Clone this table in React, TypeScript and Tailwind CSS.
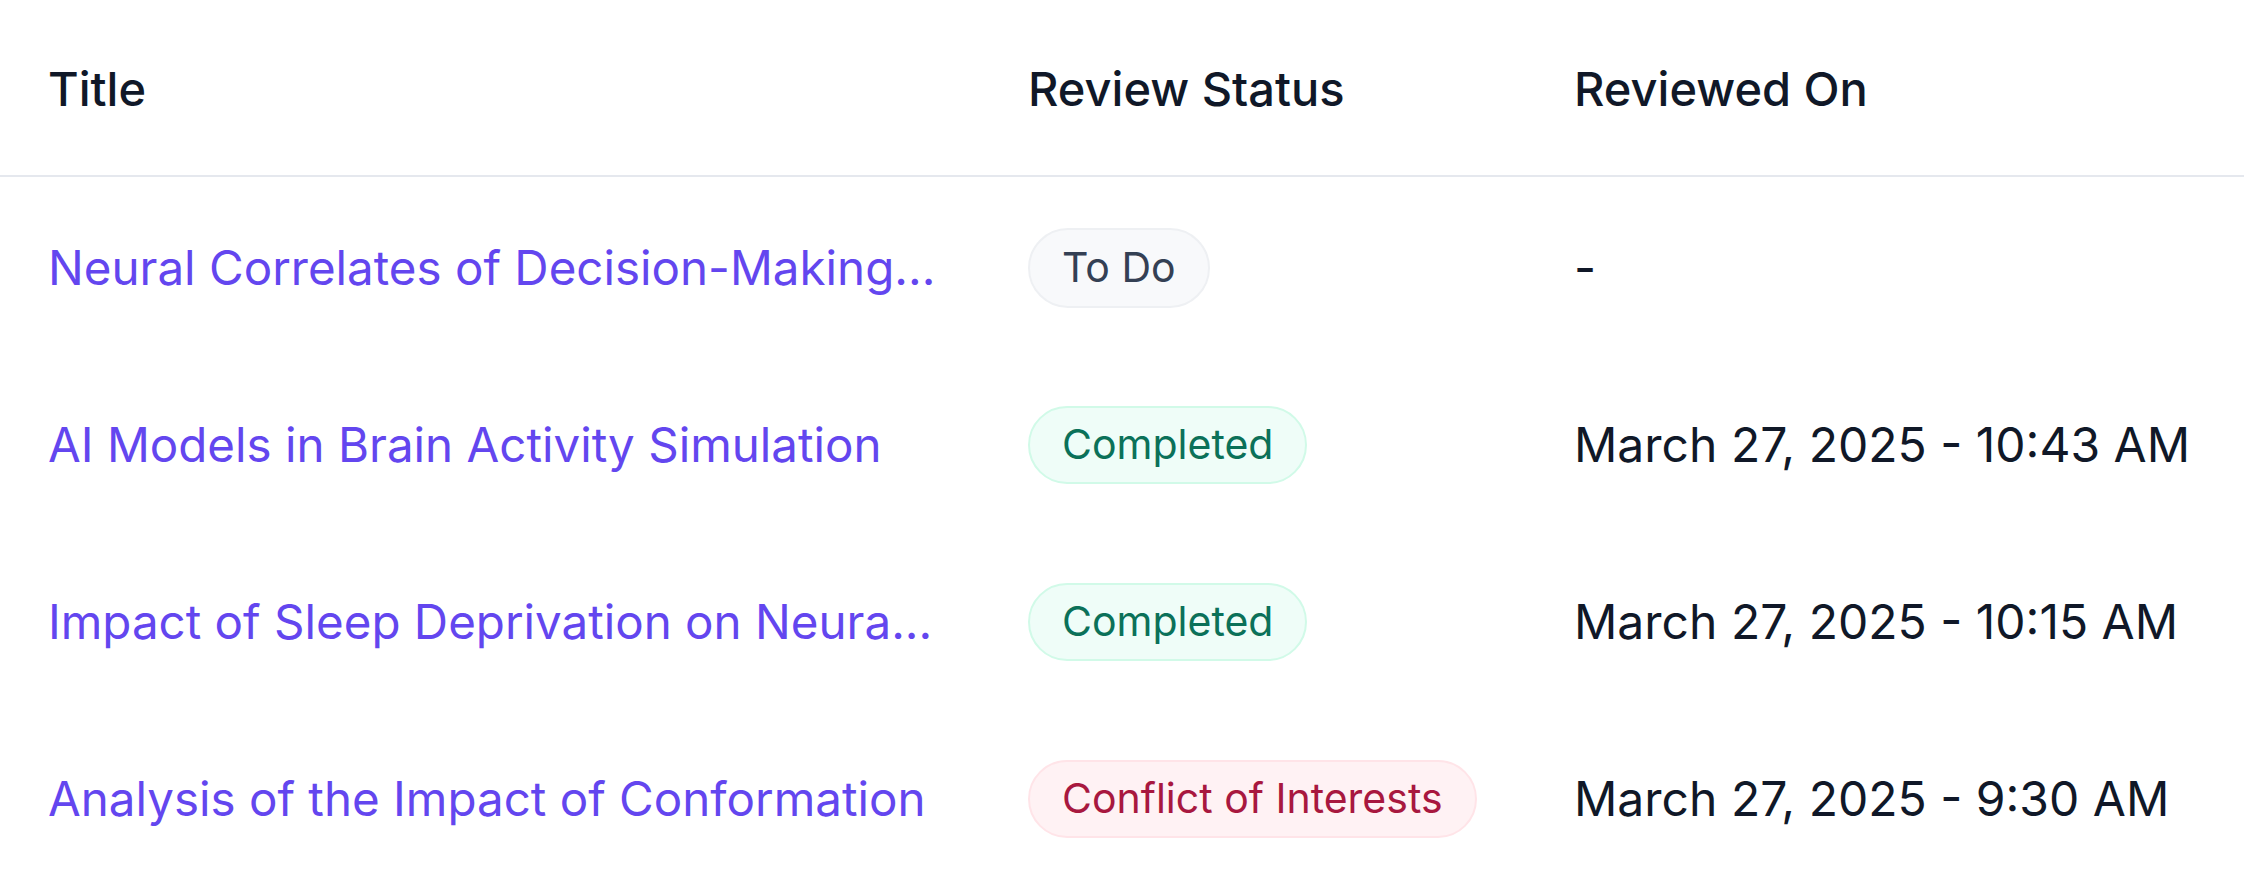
const ROWS = [
  { title: "Neural Correlates of Decision-Making...", status: "todo", reviewed: "-" },
  { title: "AI Models in Brain Activity Simulation", status: "completed", reviewed: "March 27, 2025 - 10:43 AM" },
  { title: "Impact of Sleep Deprivation on Neura...", status: "completed", reviewed: "March 27, 2025 - 10:15 AM" },
  { title: "Analysis of the Impact of Conformation", status: "conflict", reviewed: "March 27, 2025 - 9:30 AM" },
]

function StatusBadge({ status }: { status: string }) {
  if (status === "completed") {
    return (
      <span className="inline-flex items-center h-[78px] px-8 rounded-full border-2 border-[#d1fae8] bg-[#effdf8] text-[#0b7159] text-[41px] whitespace-nowrap">
        Completed
      </span>
    )
  }
  if (status === "conflict") {
    return (
      <span className="inline-flex items-center h-[78px] px-8 rounded-full border-2 border-[#ffe4e8] bg-[#fff2f4] text-[#a8183f] text-[41px] whitespace-nowrap">
        Conflict of Interests
      </span>
    )
  }
  return (
    <span className="inline-flex items-center h-[80px] px-8 rounded-full border-2 border-[#eef0f3] bg-[#f8f9fb] text-[#344054] text-[41px] whitespace-nowrap">
      To Do
    </span>
  )
}

export default function App() {
  return (
    <div className="w-[2244px] h-[884px] bg-white font-['Inter',sans-serif] overflow-hidden">
      <div className="grid grid-cols-[980px_546px_1fr] h-[177px] pt-[4px] items-center border-b-2 border-[#e5e8ee] text-[47px] font-medium text-[#101828]">
        <div className="pl-12">Title</div>
        <div className="pl-12">Review Status</div>
        <div className="pl-12">Reviewed On</div>
      </div>
      {ROWS.map((row) => (
        <div key={row.title} className="grid grid-cols-[980px_546px_1fr] h-[177px] pt-[4px] items-center text-[48px]">
          <div className="pl-12">
            <a className="block whitespace-nowrap text-[47.5px] text-[#6346ef] cursor-pointer">{row.title}</a>
          </div>
          <div className="pl-12">
            <StatusBadge status={row.status} />
          </div>
          <div className="pl-12 text-[#101828] whitespace-nowrap">{row.reviewed}</div>
        </div>
      ))}
    </div>
  )
}
